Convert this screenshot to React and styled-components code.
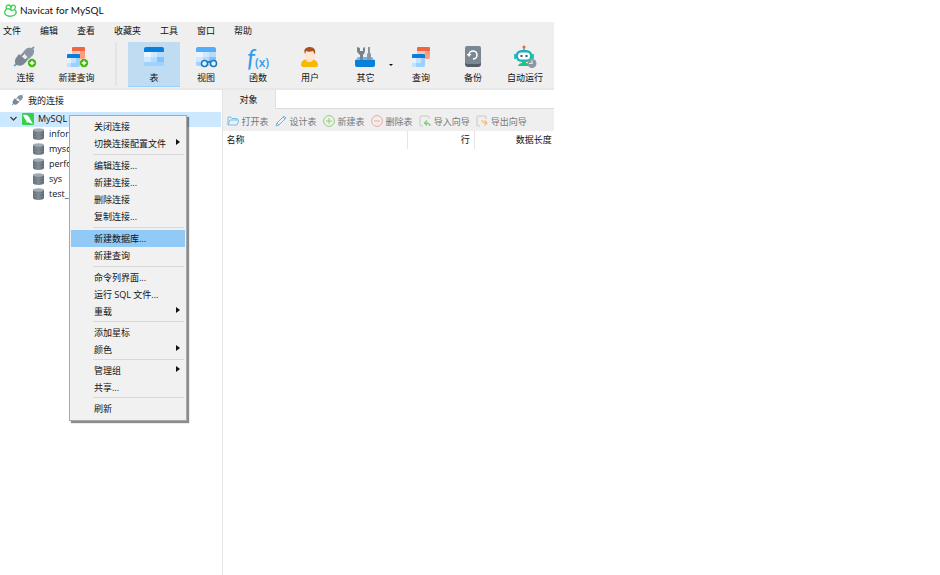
import React from "react";
import styled, { createGlobalStyle } from "styled-components";

const GlobalStyle = createGlobalStyle`
  * {
    box-sizing: border-box;
  }

  body {
    margin: 0;
    background: #fff;
    color: #111;
    font-family: "Open Sans", "Noto Sans CJK SC", sans-serif;
    font-size: 9px;
    line-height: 15px;
  }

  button {
    margin: 0;
    padding: 0;
    border: 0;
    background: none;
    color: inherit;
    font: inherit;
    white-space: nowrap;
    cursor: default;
  }

  ul {
    margin: 0;
    padding: 0;
    list-style: none;
  }

  svg {
    display: block;
    flex: none;
  }
`;

const Window = styled.div`
  position: relative;
  display: flex;
  flex-direction: column;
  width: 58.9%;
  min-height: 100vh;
`;

const TitleBar = styled.header`
  display: flex;
  align-items: center;
  gap: 3px;
  height: 22px;
  padding: 0 0 2px 4px;
`;

const Title = styled.h1`
  margin: 0;
  font-family: Lato, sans-serif;
  font-size: 10px;
  font-weight: 400;
`;

const MenuBar = styled.nav`
  display: flex;
  gap: 19px;
  height: 20px;
  padding: 1px 3px 4px;
  background: #efefef;
`;

const ToolBar = styled.div`
  display: flex;
  height: 48px;
  background: #efefef;
  border-bottom: 2px solid #e7e7e7;
`;

const ToolGroup = styled.div`
  display: flex;
`;

const Divider = styled.div`
  width: 2px;
  height: 44px;
  margin: 0 11px 0 13px;
  background: #e4e4e4;
`;

const Tool = styled.button`
  position: relative;
  display: flex;
  flex-direction: column;
  align-items: center;
  width: ${(props) => props.$width || 52}px;
  height: 45px;
  padding-top: 3px;
  background: ${(props) => (props.$active ? "#c0dcf3" : "transparent")};
  border-bottom: 1px solid
    ${(props) => (props.$active ? "#99d1ff" : "transparent")};
`;

const DropArrow = styled.span`
  position: absolute;
  right: 2px;
  top: 22px;
  border: 2px solid transparent;
  border-top-color: #111;
`;

const Formula = styled.span`
  display: flex;
  align-items: flex-end;
  justify-content: center;
  height: 25px;
  color: #2f9bea;
  font-family: Lato, sans-serif;
  font-size: 25px;
  font-style: italic;
  line-height: 25px;

  small {
    font-family: "Open Sans", sans-serif;
    font-size: 12px;
    font-style: normal;
    font-weight: 600;
    line-height: 14px;
  }
`;

const Main = styled.div`
  display: flex;
  flex: 1;
`;

const Sidebar = styled.aside`
  flex: 0 0 40.2%;
  padding-top: 2px;
  border-right: 1px solid #e4e4e4;
`;

const TreeTitle = styled.div`
  display: flex;
  align-items: center;
  gap: 4px;
  height: 20px;
  padding: 0 0 4px 12px;
`;

const Connection = styled.div`
  display: flex;
  align-items: center;
  gap: 4px;
  height: 15px;
  margin-right: 1px;
  padding: 0 0 2px 9px;
  background: #cce8ff;
`;

const Database = styled.li`
  display: flex;
  align-items: center;
  gap: 5px;
  height: 15px;
  padding: 0 0 2px 33px;
`;

const Content = styled.main`
  flex: 1;
  min-width: 0;
`;

const Tabs = styled.div`
  display: flex;
  height: 19px;

  &::after {
    content: "";
    flex: 1;
    border-bottom: 1px solid #dcdcdc;
  }
`;

const Tab = styled.button`
  width: 53px;
  background: #efefef;
  border-right: 1px solid #e0e0e0;
`;

const Actions = styled.div`
  display: flex;
  align-items: center;
  gap: 6px;
  height: 22px;
  padding: 2px 4px 0;
  background: #efefef;
  color: #777;
`;

const Action = styled.button`
  display: flex;
  align-items: center;
  gap: 3px;
`;

const Table = styled.table`
  width: 100%;
  border-collapse: collapse;
  table-layout: fixed;
`;

const Column = styled.th`
  width: ${(props) => props.$width || "auto"};
  height: 18px;
  padding: 0 ${(props) => props.$pad || 4}px 1px;
  border-right: 1px solid #e4e4e4;
  font-weight: 400;
  line-height: 15px;
  text-align: ${(props) => props.$align || "left"};

  &:last-child {
    border-right: 0;
  }
`;

const ContextMenu = styled.div`
  position: absolute;
  top: 115px;
  left: 69px;
  width: 118px;
  padding: 2px 1px 3px;
  background: #f1f1f1;
  border: 1px solid #a8a8a8;
  box-shadow: 2px 2px 1px rgba(0, 0, 0, 0.45);
`;

const MenuGroup = styled.ul`
  & + &::before {
    content: "";
    display: block;
    height: 1px;
    margin: 2px 1px 2px 22px;
    background: #d8d8d8;
  }

  & + & + & + & + &::before {
    margin-top: 1px;
  }
`;

const MenuItem = styled.button`
  display: flex;
  align-items: center;
  justify-content: space-between;
  width: 100%;
  height: 17px;
  padding: 0 5px 0 23px;
  background: ${(props) => (props.$active ? "#91c9f7" : "transparent")};
`;

const SubArrow = styled.span`
  margin-bottom: 3px;
  border: 3px solid transparent;
  border-right-width: 0;
  border-left: 4px solid #111;
`;

const Logo = () => (
  <svg width="13" height="13" viewBox="0 0 26 26" fill="none" stroke="#36d150" strokeWidth="2.6">
    <path d="M5 10C3 6 5 2 9 2c3 0 4 2 5 4 1-3 4-5 7-3 3 2 2 5 0 8 3 2 4 6 2 9-3 5-14 6-19 2-4-3-3-9 1-12z" />
    <path d="M5 10c4-2 7 0 9 3M21 11c-3 2-6 2-7 2M14 6c0 3-1 5 0 7" />
  </svg>
);

const Plus = () => (
  <g>
    <circle cx="20" cy="18" r="4.2" fill="#43b90c" />
    <path d="M20 15.7v4.6M17.7 18h4.6" stroke="#fff" strokeWidth="1.4" />
  </g>
);

const Plug = ({ size = 25, plus }) => (
  <svg width={size} height={size} viewBox={plus ? "1 0 25 25" : "2 1 22 22"}>
    <path d="M2 21l5-4M17 7l5-5" stroke="#6aa3cb" strokeWidth="1.8" />
    <path d="M4 13l3-4 8 7-3 3c-2 2-5 2-7 1-2-1-3-4-1-7z" fill="#7c8793" />
    <path d="M11 7l3-3c3-2 5-1 7 0s1 5-1 7l-3 3z" fill="#8a96a3" />
    <path d="M9 11l3-3M13 16l3-3" stroke="#7c8793" strokeWidth="1.8" />
    {plus && <Plus />}
  </svg>
);

const QueryIcon = ({ plus }) => (
  <svg width="25" height="25" viewBox="0 0 25 25">
    <path d="M8 6h13v6a2 2 0 0 1-2 2H8z" fill="#ff9c80" />
    <path d="M8 6h4v4H8zM12 6h4v4h-4z" fill="#ffc0ad" />
    <path d="M9 2h11a1 1 0 0 1 1 1v3H8V3a1 1 0 0 1 1-1z" fill="#ef6642" />
    <path d="M3 13h13v7a2 2 0 0 1-2 2H5a2 2 0 0 1-2-2z" fill="#9bd0ff" />
    <path d="M3 13h4v5H3z" fill="#e4f2ff" />
    <path d="M7 13h5v5H7zM3 18h4v4H5a2 2 0 0 1-2-2z" fill="#c3e2ff" />
    <path d="M4 9h11a1 1 0 0 1 1 1v3H3v-3a1 1 0 0 1 1-1z" fill="#087fd8" />
    {plus && <Plus />}
  </svg>
);

const TableIcon = ({ glasses }) => (
  <svg width="25" height="25" viewBox="1 0 25 25">
    <path d="M3 7h20v12a2 2 0 0 1-2 2H5a2 2 0 0 1-2-2z" fill="#9ed2ff" />
    <path d="M3 7h7v5H3z" fill="#e9f5ff" />
    <path d="M10 7h6v5h-6zM3 12h7v5H3z" fill="#cfe8ff" />
    <path d="M16 7h7v5h-7zM10 12h6v5h-6z" fill="#b4dcff" />
    <path d="M16 12h7v5h-7z" fill="#81c3ff" />
    <path d="M5 2h16a2 2 0 0 1 2 2v3H3V4a2 2 0 0 1 2-2z" fill={glasses ? "#55adf7" : "#087fd8"} />
    {glasses && (
      <g fill="#e8f5ff" stroke="#1677be" strokeWidth="1.5">
        <circle cx="11.500" cy="18.500" r="3" />
        <circle cx="20.500" cy="18.500" r="3" />
        <path d="M14.500 17.500q1.500-1.500 3 0" fill="none" />
      </g>
    )}
  </svg>
);

const UserIcon = () => (
  <svg width="25" height="25" viewBox="1 0 25 25">
    <path d="M4 20c0-4 3-6 8-6s9 2 9 6c0 1-1 2-2 2H6c-1 0-2-1-2-2z" fill="#f7b900" />
    <path d="M9 12h7v3c-1 3-6 3-7 0z" fill="#ffdcc4" />
    <path d="M8 6h10v4c0 7-10 7-10 0z" fill="#ffe5d4" />
    <path d="M8 9C6 4 9 2 13 2s6 3 5 7c-1 0-1-2-2-3-3 1-5 1-7 0z" fill="#a75320" />
  </svg>
);

const OtherIcon = () => (
  <svg width="25" height="25" viewBox="1 0 25 25">
    <path d="M6 12h14l3 4H3z" fill="#66b9f7" />
    <path d="M5 2v4q0 2 3 4v6h3v-6q2-2 2-4V2l-2 1v3H8V3z" fill="#77838f" />
    <path d="M16 2h2v6l1 1v7h-4V9l1-1z" fill="#8b96a1" />
    <path d="M3 15h20v5a2 2 0 0 1-2 2H5a2 2 0 0 1-2-2z" fill="#087fd8" />
  </svg>
);

const BackupIcon = () => (
  <svg width="25" height="25" viewBox="0 0 25 25">
    <rect x="4" y="4" width="16" height="18" rx="3" fill="#535d67" />
    <rect x="4" y="1" width="16" height="18" rx="2" fill="#7b8792" />
    <path d="M8 10a4 4 0 1 1 4 4" fill="none" stroke="#fff" strokeWidth="1.6" />
    <path d="M5.500 9h5L8 12z" fill="#fff" />
  </svg>
);

const RobotIcon = () => (
  <svg width="25" height="25" viewBox="1 0 25 25">
    <defs>
      <linearGradient id="robot" x1="0" y1="0" x2="1" y2="1">
        <stop stopColor="#19a9d3" />
        <stop offset="1" stopColor="#24c08c" />
      </linearGradient>
    </defs>
    <path d="M12 2v4" stroke="#6d7780" strokeWidth="1.2" />
    <circle cx="12" cy="2" r="1.500" fill="#ef5a55" />
    <path d="M2 9h2v5H2zM20 9h2v5h-2z" fill="#3abfc4" />
    <rect x="3.500" y="5" width="17" height="12" rx="6" fill="url(#robot)" />
    <rect x="6" y="7.500" width="12" height="7" rx="3.500" fill="#fff" />
    <path d="M9.500 10v2M14.500 10v2" stroke="#245a8c" strokeWidth="2" />
    <path d="M6 21q1-3 4-3v-2h4v2q3 0 4 3z" fill="#24c08c" />
    <circle cx="20" cy="18.500" r="4.500" fill="#8c99a5" />
    <path d="M20 15.500v3h-3" fill="none" stroke="#e5eaee" strokeWidth="1.2" />
  </svg>
);

const MysqlIcon = () => (
  <svg width="12" height="12" viewBox="0 0 12 12">
    <rect width="12" height="12" rx="1" fill="#35d04c" />
    <path d="M1 2c4-1 6 1 7 4l3 5-3-1-2-1-1 1-1-3-1-1z" fill="#fff" />
  </svg>
);

const DatabaseIcon = () => (
  <svg width="11" height="12" viewBox="0 0 11 12">
    <defs>
      <linearGradient id="steel">
        <stop stopColor="#606b74" />
        <stop offset="0.5" stopColor="#7f8b94" />
        <stop offset="1" stopColor="#59636c" />
      </linearGradient>
    </defs>
    <path d="M0 2v8c0 2.500 11 2.500 11 0V2z" fill="url(#steel)" />
    <ellipse cx="5.500" cy="2" rx="5.500" ry="1.800" fill="#a0aab2" />
    <path d="M0 5q5.500 2.500 11 0M0 8q5.500 2.500 11 0" fill="none" stroke="#88939b" strokeWidth="0.5" />
  </svg>
);

const Chevron = () => (
  <svg width="9" height="9" viewBox="0 0 9 9">
    <path d="M1.500 3l3 3 3-3" fill="none" stroke="#444" strokeWidth="1.3" />
  </svg>
);

const actionShapes = {
  open: <path d="M1 10V2h3l1 1.500h5V5M1 10l2-5h9l-2 5z" stroke="#79bfe9" />,
  design: <path d="M1 11l1-3 7-7 2 2-7 7zM8 2l2 2M2 8l2 2" stroke="#71b8e8" />,
  add: (
    <g stroke="#8ed27a">
      <circle cx="6" cy="6" r="5.400" />
      <path d="M6 3v6M3 6h6" />
    </g>
  ),
  remove: (
    <g stroke="#f4a79e">
      <circle cx="6" cy="6" r="5.400" />
      <path d="M3 6h6" />
    </g>
  ),
  importing: (
    <g>
      <path d="M4 11H2a1 1 0 0 1-1-1V2a1 1 0 0 1 1-1h7a1 1 0 0 1 1 1v2" stroke="#c8c8c8" />
      <path d="M11 11c0-2-1-3-5-3M8 5.500L5.500 8 8 10.500" stroke="#80cf79" strokeWidth="1.3" />
    </g>
  ),
  exporting: (
    <g>
      <path d="M4 11H2a1 1 0 0 1-1-1V2a1 1 0 0 1 1-1h7a1 1 0 0 1 1 1v2" stroke="#c8c8c8" />
      <path d="M6 5c0 2 1 3 5 3M8.500 5.500L11 8l-2.500 2.500" stroke="#f5bd72" strokeWidth="1.3" />
    </g>
  ),
};

const menus = ["文件", "编辑", "查看", "收藏夹", "工具", "窗口", "帮助"];

const createTools = [
  { label: "连接", icon: <Plug plus />, width: 51 },
  { label: "新建查询", icon: <QueryIcon plus />, width: 51 },
];

const objectTools = [
  { label: "表", icon: <TableIcon />, active: true },
  { label: "视图", icon: <TableIcon glasses /> },
  { label: "函数", icon: <Formula>f<small>(x)</small></Formula> },
  { label: "用户", icon: <UserIcon /> },
  { label: "其它", icon: <OtherIcon />, width: 59, drop: true },
  { label: "查询", icon: <QueryIcon /> },
  { label: "备份", icon: <BackupIcon /> },
  { label: "自动运行", icon: <RobotIcon /> },
];

const databases = ["information_schema", "mysql", "performance_schema", "sys", "test_db"];

const actions = [
  { label: "打开表", icon: "open" },
  { label: "设计表", icon: "design" },
  { label: "新建表", icon: "add" },
  { label: "删除表", icon: "remove" },
  { label: "导入向导", icon: "importing" },
  { label: "导出向导", icon: "exporting" },
];

const contextGroups = [
  ["关闭连接", "切换连接配置文件"],
  ["编辑连接...", "新建连接...", "删除连接", "复制连接..."],
  ["新建数据库...", "新建查询"],
  ["命令列界面...", "运行 SQL 文件...", "重载"],
  ["添加星标", "颜色"],
  ["管理组", "共享..."],
  ["刷新"],
];

const withSubmenu = ["切换连接配置文件", "重载", "颜色", "管理组"];

const renderTool = (tool) => (
  <Tool key={tool.label} $active={tool.active} $width={tool.width}>
    {tool.icon}
    <span>{tool.label}</span>
    {tool.drop && <DropArrow />}
  </Tool>
);

const App = () => {
  return (
    <>
      <GlobalStyle />
      <Window>
        <TitleBar>
          <Logo />
          <Title>Navicat for MySQL</Title>
        </TitleBar>
        <MenuBar>
          {menus.map((menu) => (
            <button key={menu}>{menu}</button>
          ))}
        </MenuBar>
        <ToolBar>
          <ToolGroup>{createTools.map(renderTool)}</ToolGroup>
          <Divider />
          <ToolGroup>{objectTools.map(renderTool)}</ToolGroup>
        </ToolBar>

        <Main>
          <Sidebar>
            <TreeTitle>
              <Plug size={12} />
              我的连接
            </TreeTitle>
            <Connection>
              <Chevron />
              <MysqlIcon />
              <span>MySQL</span>
            </Connection>
            <ul>
              {databases.map((name) => (
                <Database key={name}>
                  <DatabaseIcon />
                  {name}
                </Database>
              ))}
            </ul>
          </Sidebar>

          <Content>
            <Tabs>
              <Tab>对象</Tab>
            </Tabs>
            <Actions>
              {actions.map((action) => (
                <Action key={action.label}>
                  <svg width="12" height="12" viewBox="0 0 12 12" fill="none">
                    {actionShapes[action.icon]}
                  </svg>
                  {action.label}
                </Action>
              ))}
            </Actions>
            <Table>
              <thead>
                <tr>
                  <Column $width="56%">名称</Column>
                  <Column $width="20%" $align="right">
                    行
                  </Column>
                  <Column $align="right" $pad={2}>
                    数据长度
                  </Column>
                </tr>
              </thead>
            </Table>
          </Content>
        </Main>

        <ContextMenu role="menu">
          {contextGroups.map((group) => (
            <MenuGroup key={group[0]}>
              {group.map((item) => (
                <li key={item}>
                  <MenuItem role="menuitem" $active={item === "新建数据库..."}>
                    {item}
                    {withSubmenu.includes(item) && <SubArrow />}
                  </MenuItem>
                </li>
              ))}
            </MenuGroup>
          ))}
        </ContextMenu>
      </Window>
    </>
  );
};

export default App;
